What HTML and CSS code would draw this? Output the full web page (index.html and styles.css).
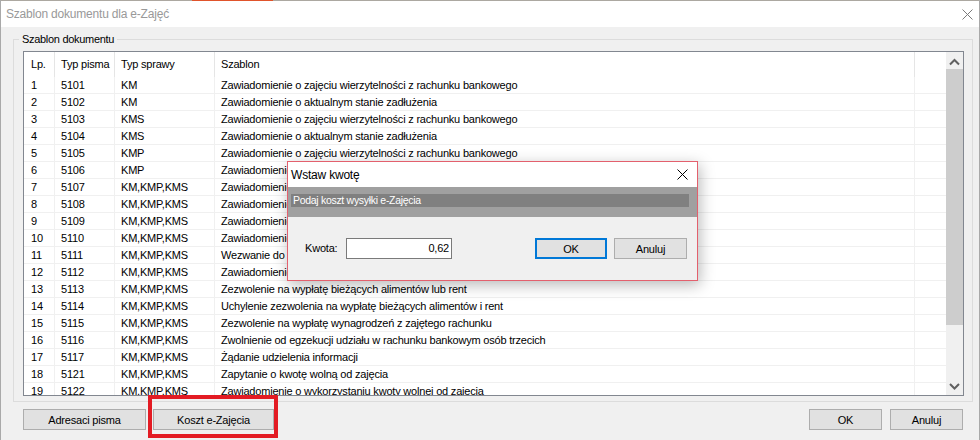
FILE: index.html
```html
<!DOCTYPE html>
<html lang="pl">
<head>
<meta charset="utf-8">
<title>Szablon dokumentu dla e-Zajęć</title>
<link rel="stylesheet" href="styles.css">
</head>
<body>
<div class="window">
  <div class="topline"><span class="accent"></span></div>
  <div class="titlebar">
    <span class="title">Szablon dokumentu dla e-Zajęć</span>
    <svg class="close close-main" width="11" height="11" viewBox="0 0 11 11"><path d="M0.5 0.5 L10.5 10.5 M10.5 0.5 L0.5 10.5" stroke="#7a7a7a" stroke-width="1" fill="none"/></svg>
  </div>
  <div class="content">
    <fieldset class="group">
      <legend>Szablon dokumentu</legend>
      <div class="listbox">
        <div class="grid">
          <div class="row head"><div class="c c1">Lp.</div><div class="c">Typ pisma</div><div class="c">Typ sprawy</div><div class="c">Szablon</div><div class="c c5"></div></div>
          <div class="row"><div class="c c1">1</div><div class="c">5101</div><div class="c">KM</div><div class="c">Zawiadomienie o zajęciu wierzytelności z rachunku bankowego</div><div class="c c5"></div></div>
          <div class="row"><div class="c c1">2</div><div class="c">5102</div><div class="c">KM</div><div class="c">Zawiadomienie o aktualnym stanie zadłużenia</div><div class="c c5"></div></div>
          <div class="row"><div class="c c1">3</div><div class="c">5103</div><div class="c">KMS</div><div class="c">Zawiadomienie o zajęciu wierzytelności z rachunku bankowego</div><div class="c c5"></div></div>
          <div class="row"><div class="c c1">4</div><div class="c">5104</div><div class="c">KMS</div><div class="c">Zawiadomienie o aktualnym stanie zadłużenia</div><div class="c c5"></div></div>
          <div class="row"><div class="c c1">5</div><div class="c">5105</div><div class="c">KMP</div><div class="c">Zawiadomienie o zajęciu wierzytelności z rachunku bankowego</div><div class="c c5"></div></div>
          <div class="row"><div class="c c1">6</div><div class="c">5106</div><div class="c">KMP</div><div class="c">Zawiadomienie o aktualnym stanie zadłużenia</div><div class="c c5"></div></div>
          <div class="row"><div class="c c1">7</div><div class="c">5107</div><div class="c">KM,KMP,KMS</div><div class="c">Zawiadomienie o zajęciu wierzytelności z rachunku bankowego</div><div class="c c5"></div></div>
          <div class="row"><div class="c c1">8</div><div class="c">5108</div><div class="c">KM,KMP,KMS</div><div class="c">Zawiadomienie o zajęciu rachunku bankowego</div><div class="c c5"></div></div>
          <div class="row"><div class="c c1">9</div><div class="c">5109</div><div class="c">KM,KMP,KMS</div><div class="c">Zawiadomienie o zajęciu wierzytelności</div><div class="c c5"></div></div>
          <div class="row"><div class="c c1">10</div><div class="c">5110</div><div class="c">KM,KMP,KMS</div><div class="c">Zawiadomienie o uchyleniu zajęcia</div><div class="c c5"></div></div>
          <div class="row"><div class="c c1">11</div><div class="c">5111</div><div class="c">KM,KMP,KMS</div><div class="c">Wezwanie do udzielenia informacji</div><div class="c c5"></div></div>
          <div class="row"><div class="c c1">12</div><div class="c">5112</div><div class="c">KM,KMP,KMS</div><div class="c">Zawiadomienie o zmianie wysokości zajęcia</div><div class="c c5"></div></div>
          <div class="row"><div class="c c1">13</div><div class="c">5113</div><div class="c">KM,KMP,KMS</div><div class="c">Zezwolenie na wypłatę bieżących alimentów lub rent</div><div class="c c5"></div></div>
          <div class="row"><div class="c c1">14</div><div class="c">5114</div><div class="c">KM,KMP,KMS</div><div class="c">Uchylenie zezwolenia na wypłatę bieżących alimentów i rent</div><div class="c c5"></div></div>
          <div class="row"><div class="c c1">15</div><div class="c">5115</div><div class="c">KM,KMP,KMS</div><div class="c">Zezwolenie na wypłatę wynagrodzeń z zajętego rachunku</div><div class="c c5"></div></div>
          <div class="row"><div class="c c1">16</div><div class="c">5116</div><div class="c">KM,KMP,KMS</div><div class="c">Zwolnienie od egzekucji udziału w rachunku bankowym osób trzecich</div><div class="c c5"></div></div>
          <div class="row"><div class="c c1">17</div><div class="c">5117</div><div class="c">KM,KMP,KMS</div><div class="c">Żądanie udzielenia informacji</div><div class="c c5"></div></div>
          <div class="row"><div class="c c1">18</div><div class="c">5121</div><div class="c">KM,KMP,KMS</div><div class="c">Zapytanie o kwotę wolną od zajęcia</div><div class="c c5"></div></div>
          <div class="row"><div class="c c1">19</div><div class="c">5122</div><div class="c">KM,KMP,KMS</div><div class="c">Zawiadomienie o wykorzystaniu kwoty wolnej od zajęcia</div><div class="c c5"></div></div>
        </div>
        <div class="scrollbar">
          <div class="arrow"><svg width="17" height="17" viewBox="0 0 17 17"><path d="M4 12.5 L8.5 8 L13 12.5" stroke="#606060" stroke-width="2" fill="none"/></svg></div>
          <div class="track"><div class="thumb"></div></div>
          <div class="arrow"><svg width="17" height="17" viewBox="0 0 17 17"><path d="M4 6 L8.5 10.5 L13 6" stroke="#606060" stroke-width="2" fill="none"/></svg></div>
        </div>
      </div>
    </fieldset>
    <div class="buttons">
      <button class="btn b-adresaci">Adresaci pisma</button>
      <button class="btn b-koszt">Koszt e-Zajęcia</button>
      <button class="btn b-ok">OK</button>
      <button class="btn b-cancel">Anuluj</button>
    </div>
  </div>

  <div class="dialog">
    <div class="dlg-title">
      <span>Wstaw kwotę</span>
      <svg class="close" width="11" height="11" viewBox="0 0 11 11"><path d="M0.5 0.5 L10.5 10.5 M10.5 0.5 L0.5 10.5" stroke="#000" stroke-width="1" fill="none"/></svg>
    </div>
    <div class="dlg-band"><div class="dlg-bar">Podaj koszt wysyłki e-Zajęcia</div></div>
    <div class="dlg-body">
      <span class="dlg-label">Kwota:</span>
      <div class="dlg-input">0,62</div>
      <button class="btn dlg-ok">OK</button>
      <button class="btn dlg-cancel">Anuluj</button>
    </div>
  </div>
</div>
</body>
</html>
```

FILE: styles.css
```css
* { box-sizing: border-box; }
html, body { margin: 0; padding: 0; }
body {
  width: 980px;
  height: 440px;
  overflow: hidden;
  font-family: "Liberation Sans", Arial, sans-serif;
  font-size: 11px;
  letter-spacing: -0.2px;
  color: #000;
  background: #f0f0f0;
}
.window {
  position: relative;
  width: 980px;
  height: 440px;
  border-left: 1px solid #a9a9a9;
  border-right: 1px solid #a9a9a9;
  display: flex;
  flex-direction: column;
  background: #f0f0f0;
}
.topline {
  height: 1px;
  background: #aca8a1;
  display: flex;
}
.accent {
  margin-left: 191px;
  width: 81px;
  height: 1px;
  background: #e0532b;
}
.titlebar {
  height: 26px;
  background: #fff;
  display: flex;
  align-items: center;
  justify-content: space-between;
  padding: 0 6px 0 5px;
}
.title {
  font-size: 12px;
  color: #999;
}
.close { display: block; }
.content {
  flex: 1;
  display: flex;
  flex-direction: column;
}
.group {
  margin: 4px 6px 0 12px;
  border: 1px solid #dcdcdc;
  padding: 4px 8px 5px 9px;
  min-width: 0;
}
.group legend {
  font-size: 11px;
  line-height: 16px;
  padding: 0 3px;
  margin-left: -4px;
  letter-spacing: -0.3px;
}
.listbox {
  height: 345px;
  border: 1px solid #828790;
  background: #fff;
  display: flex;
}
.grid {
  flex: 1;
  overflow: hidden;
}
.row {
  display: grid;
  grid-template-columns: 31px 60px 100px 700px 31px;
  height: 17px;
  border-bottom: 1px solid #f0f0f0;
}
.row .c {
  border-right: 1px solid #f0f0f0;
  padding-left: 6px;
  line-height: 16px;
  white-space: nowrap;
  overflow: hidden;
}
.row .c1 { padding-left: 7px; }
.row .c5 { border-right: none; }
.row.head {
  height: 25px;
  border-bottom: none;
}
.row.head .c {
  line-height: 25px;
  border-right-color: #e5e5e5;
}
.row.head .c5 { border-right: none; }
.scrollbar {
  width: 17px;
  background: #f0f0f0;
  display: flex;
  flex-direction: column;
}
.arrow { height: 17px; }
.arrow svg { display: block; }
.track { flex: 1; }
.thumb {
  height: 256px;
  background: #cdcdcd;
}
.buttons {
  display: flex;
  margin: 7px 16px 0 22px;
  height: 21px;
}
.btn {
  height: 21px;
  border: 1px solid #adadad;
  background: #e1e1e1;
  font-family: "Liberation Sans", Arial, sans-serif;
  font-size: 11px;
  letter-spacing: -0.2px;
  color: #000;
  padding: 0;
  margin: 0;
}
.b-adresaci { width: 123px; }
.b-koszt {
  width: 121px;
  margin-left: 7px;
  position: relative;
}
.b-koszt::after {
  content: "";
  position: absolute;
  left: -6px;
  top: -15px;
  right: -5px;
  bottom: -9px;
  border: 4px solid #e31b23;
}
.b-ok { margin-left: auto; width: 73px; }
.b-cancel { margin-left: 8px; width: 73px; }

.dialog {
  position: absolute;
  left: 286px;
  top: 161px;
  width: 411px;
  height: 120px;
  border: 1px solid #e3606d;
  background: #f0f0f0;
  box-shadow: 2px 4px 14px rgba(0, 0, 0, 0.28);
  display: flex;
  flex-direction: column;
}
.dlg-title {
  height: 25px;
  background: #fff;
  display: flex;
  align-items: center;
  justify-content: space-between;
  padding: 0 9px 0 3px;
  font-size: 12px;
}
.dlg-band {
  height: 30px;
  background: #a0a0a0;
  padding: 7px 8px 0 3px;
}
.dlg-bar {
  height: 13px;
  background: #808080;
  color: #fff;
  font-size: 10.5px;
  line-height: 13px;
  padding-left: 2px;
  letter-spacing: -0.3px;
  white-space: nowrap;
  overflow: hidden;
}
.dlg-body {
  flex: 1;
  display: flex;
  align-items: flex-start;
  padding: 21px 10px 0 17px;
}
.dlg-label {
  width: 41px;
  line-height: 21px;
}
.dlg-input {
  width: 106px;
  height: 21px;
  border: 1px solid #7a7a7a;
  background: #fff;
  text-align: right;
  padding-right: 2px;
  line-height: 19px;
}
.dlg-ok {
  margin-left: auto;
  width: 72px;
  border: 2px solid #0078d7;
}
.dlg-cancel {
  margin-left: 7px;
  width: 73px;
}
```
